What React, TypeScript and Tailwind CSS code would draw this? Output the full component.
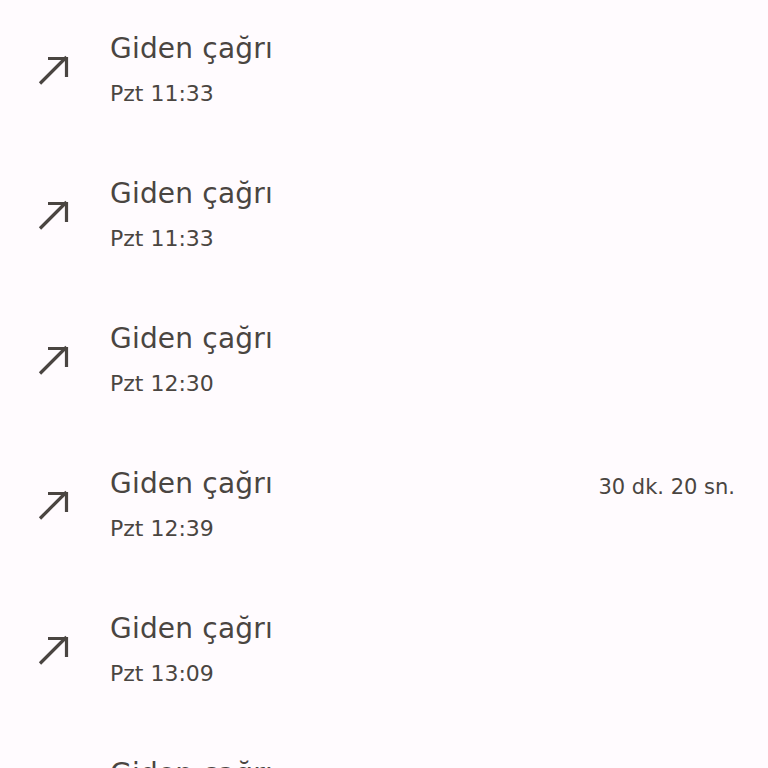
import React from "react";

const rows = [
  { time: "Pzt 11:33", dur: "" },
  { time: "Pzt 11:33", dur: "" },
  { time: "Pzt 12:30", dur: "" },
  { time: "Pzt 12:39", dur: "30 dk. 20 sn." },
  { time: "Pzt 13:09", dur: "" },
  { time: "Pzt 13:40", dur: "2 dk. 33 sn." },
];

function Arrow() {
  return (
    <svg width="36" height="36" viewBox="0 0 36 36" fill="none">
      <path d="M4 30.5 L30.5 4" stroke="#4a4541" strokeWidth="3.2" />
      <path d="M12 5.5 H30.5 V24" stroke="#4a4541" strokeWidth="3.2" />
    </svg>
  );
}

export default function App() {
  return (
    <div
      className="w-[768px] h-[768px] overflow-hidden bg-[#fffbfe] text-[#4a4541]"
      style={{ fontFamily: "'DejaVu Sans', 'Noto Sans', sans-serif" }}
    >
      {rows.map((r, i) => (
        <div key={i} className="h-[145px] flex items-center pl-[36px] pr-[33px]">
          <div className="w-[74px] flex items-center -mt-[4px]">
            <Arrow />
          </div>
          <div className="flex-1 flex flex-col -mt-[5px]">
            <div className="text-[28px] leading-[44px] tracking-[0.2px]">Giden çağrı</div>
            <div className="text-[22px] leading-[38px] mt-[4px]">{r.time}</div>
          </div>
          {r.dur && <div className="text-[21px] leading-[32px] self-start mt-[36px]">{r.dur}</div>}
        </div>
      ))}
    </div>
  );
}
